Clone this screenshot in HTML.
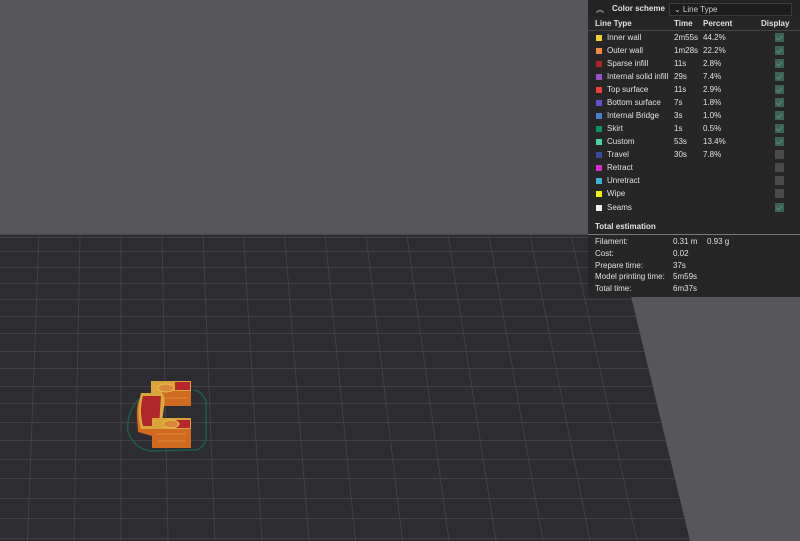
<!DOCTYPE html>
<html><head><meta charset="utf-8"><style>
*{margin:0;padding:0;box-sizing:border-box}
body{width:800px;height:541px;overflow:hidden;background:#56565b;font-family:"Liberation Sans",sans-serif;position:relative}
svg.scene{position:absolute;left:0;top:0}
.panel{position:absolute;left:588px;top:0;width:212px;height:297px;background:#262626;color:#e0e0e0;font-size:8px}
.hdr{height:17px;background:#232323;position:relative}
.hdr .ic{position:absolute;left:8px;top:4px;font-size:8px;color:#bbb}
.hdr .t{position:absolute;left:24px;top:4px;font-weight:bold}
.dd{position:absolute;left:81px;top:3px;width:123px;height:13px;background:#1d1d1d;border:1px solid #3a3a3a;padding-left:4px;line-height:11px;color:#ccc}
.row{position:absolute;left:0;width:212px;height:13px;line-height:13px}
.row span{position:absolute}
.sq{left:8px;top:4px;width:6px;height:6px}
.n{left:19px}.tm{left:86px}.pc{left:115px}
.cb{position:absolute;left:187px;top:2px;width:9px;height:9px;background:#4a4a4a}
.cb.on{background:#3c6354}
.cb.on:after{content:"";position:absolute;left:2px;top:1px;width:3px;height:5px;border:solid #5a8a78;border-width:0 1px 1px 0;transform:rotate(40deg)}
.b{font-weight:bold}
</style></head><body>
<svg class="scene" width="800" height="541">
<polygon points="0,234 616,234 690,541 0,541" fill="#2d2c31"/>
<line x1="0" y1="234.5" x2="616" y2="234.5" stroke="#45454a"/>
<g stroke="#404046" stroke-width="1">
<line x1="-2" y1="235" x2="-19" y2="541"/><line x1="39" y1="235" x2="27.5" y2="541"/>
<line x1="80" y1="235" x2="74" y2="541"/><line x1="121" y1="235" x2="121" y2="541"/>
<line x1="162" y1="235" x2="168" y2="541"/><line x1="203" y1="235" x2="215" y2="541"/>
<line x1="243.5" y1="235" x2="262" y2="541"/><line x1="284.5" y1="235" x2="309" y2="541"/>
<line x1="325" y1="235" x2="355.5" y2="541"/><line x1="366" y1="235" x2="402.5" y2="541"/>
<line x1="407" y1="235" x2="449" y2="541"/><line x1="448" y1="235" x2="496" y2="541"/>
<line x1="489" y1="235" x2="543" y2="541"/><line x1="530" y1="235" x2="590" y2="541"/>
<line x1="571" y1="235" x2="637" y2="541"/>
<line x1="0" y1="237.5" x2="616" y2="237.5"/><line x1="0" y1="251.5" x2="620" y2="251.5"/>
<line x1="0" y1="267.5" x2="624" y2="267.5"/><line x1="0" y1="283.5" x2="628" y2="283.5"/>
<line x1="0" y1="299.5" x2="632" y2="299.5"/><line x1="0" y1="316.5" x2="636" y2="316.5"/>
<line x1="0" y1="333.5" x2="640" y2="333.5"/><line x1="0" y1="351.5" x2="644" y2="351.5"/>
<line x1="0" y1="368.5" x2="648" y2="368.5"/><line x1="0" y1="386.5" x2="652" y2="386.5"/>
<line x1="0" y1="403.5" x2="657" y2="403.5"/><line x1="0" y1="422.5" x2="661" y2="422.5"/>
<line x1="0" y1="440.5" x2="666" y2="440.5"/><line x1="0" y1="459.5" x2="670" y2="459.5"/>
<line x1="0" y1="478.5" x2="675" y2="478.5"/><line x1="0" y1="498.5" x2="679" y2="498.5"/>
<line x1="0" y1="518.5" x2="684" y2="518.5"/><line x1="0" y1="538.5" x2="689" y2="538.5"/>
</g>
<path d="M140,398 Q126,412 128,432 Q134,448 150,451 L196,450 Q208,446 206,430 L206,402 Q203,392 194,390" fill="none" stroke="#1a5e4a" stroke-width="1.5"/>
<rect x="162" y="390" width="29" height="16" fill="#d06a20"/>
<polygon points="151,381 191,381 191,391 162,391 162,394 151,394" fill="#d9a43a"/>
<rect x="175" y="382" width="15" height="8" fill="#b8262b"/>
<ellipse cx="166" cy="388" rx="8" ry="4" fill="#d9873a" stroke="#e8c04a"/>
<path d="M139,400 Q136,408 137,418 L138,432 L152,436 L152,398 Z" fill="#d06a20"/>
<path d="M141,393 L163,393 L165,400 L161,429 L141,429 Q136,412 141,393 Z" fill="#d8a83a"/>
<path d="M143,396 L161,396 L159,426 L143,426 Q139,411 143,396 Z" fill="#b0262b"/>
<rect x="152" y="428" width="39" height="20" fill="#d06a20"/>
<polygon points="152,418 191,418 191,429 152,429" fill="#d9a43a"/>
<rect x="176" y="420" width="14" height="8" fill="#b8262b"/>
<ellipse cx="171" cy="424" rx="8" ry="4" fill="#d9873a" stroke="#e8c04a"/>
<g stroke="#e89a4a" stroke-width="1" opacity=".6"><line x1="156" y1="434" x2="186" y2="434"/><line x1="158" y1="441" x2="185" y2="441"/><line x1="166" y1="398" x2="188" y2="398"/></g>
</svg>
<div class="panel">
<div class="hdr"><span class="ic">︽</span><span class="t">Color scheme</span><div class="dd">⌄ Line Type</div></div>
<div class="row b" style="top:17px"><span style="left:7px">Line Type</span><span style="left:86px">Time</span><span style="left:115px">Percent</span><span style="left:173px">Display</span></div>
<div style="position:absolute;left:0;top:30px;width:212px;height:1px;background:#444"></div>
<div class="row" style="top:31px"><span class="sq" style="background:#f0d23c"></span><span class="n">Inner wall</span><span class="tm">2m55s</span><span class="pc">44.2%</span><i class="cb on"></i></div>
<div class="row" style="top:44px"><span class="sq" style="background:#f08a3c"></span><span class="n">Outer wall</span><span class="tm">1m28s</span><span class="pc">22.2%</span><i class="cb on"></i></div>
<div class="row" style="top:57px"><span class="sq" style="background:#a8282c"></span><span class="n">Sparse infill</span><span class="tm">11s</span><span class="pc">2.8%</span><i class="cb on"></i></div>
<div class="row" style="top:70px"><span class="sq" style="background:#9a50c8"></span><span class="n">Internal solid infill</span><span class="tm">29s</span><span class="pc">7.4%</span><i class="cb on"></i></div>
<div class="row" style="top:83px"><span class="sq" style="background:#e84040"></span><span class="n">Top surface</span><span class="tm">11s</span><span class="pc">2.9%</span><i class="cb on"></i></div>
<div class="row" style="top:96px"><span class="sq" style="background:#6a50c8"></span><span class="n">Bottom surface</span><span class="tm">7s</span><span class="pc">1.8%</span><i class="cb on"></i></div>
<div class="row" style="top:109px"><span class="sq" style="background:#4a80c8"></span><span class="n">Internal Bridge</span><span class="tm">3s</span><span class="pc">1.0%</span><i class="cb on"></i></div>
<div class="row" style="top:122px"><span class="sq" style="background:#10906a"></span><span class="n">Skirt</span><span class="tm">1s</span><span class="pc">0.5%</span><i class="cb on"></i></div>
<div class="row" style="top:135px"><span class="sq" style="background:#50d0a0"></span><span class="n">Custom</span><span class="tm">53s</span><span class="pc">13.4%</span><i class="cb on"></i></div>
<div class="row" style="top:148px"><span class="sq" style="background:#3a4a9a"></span><span class="n">Travel</span><span class="tm">30s</span><span class="pc">7.8%</span><i class="cb"></i></div>
<div class="row" style="top:161px"><span class="sq" style="background:#d030c8"></span><span class="n">Retract</span><i class="cb"></i></div>
<div class="row" style="top:174px"><span class="sq" style="background:#40b0d0"></span><span class="n">Unretract</span><i class="cb"></i></div>
<div class="row" style="top:187px"><span class="sq" style="background:#f0f010"></span><span class="n">Wipe</span><i class="cb"></i></div>
<div class="row" style="top:201px"><span class="sq" style="background:#eeeeee"></span><span class="n">Seams</span><i class="cb on"></i></div>
<div class="row b" style="top:220px"><span style="left:7px">Total estimation</span></div>
<div style="position:absolute;left:0;top:234px;width:212px;height:1px;background:#777"></div>
<div class="row" style="top:235px"><span style="left:7px">Filament:</span><span style="left:85px">0.31 m</span><span style="left:119px">0.93 g</span></div>
<div class="row" style="top:247px"><span style="left:7px">Cost:</span><span style="left:85px">0.02</span></div>
<div class="row" style="top:259px"><span style="left:7px">Prepare time:</span><span style="left:85px">37s</span></div>
<div class="row" style="top:270px"><span style="left:7px">Model printing time:</span><span style="left:85px">5m59s</span></div>
<div class="row" style="top:282px"><span style="left:7px">Total time:</span><span style="left:85px">6m37s</span></div>
</div>
</body></html>
